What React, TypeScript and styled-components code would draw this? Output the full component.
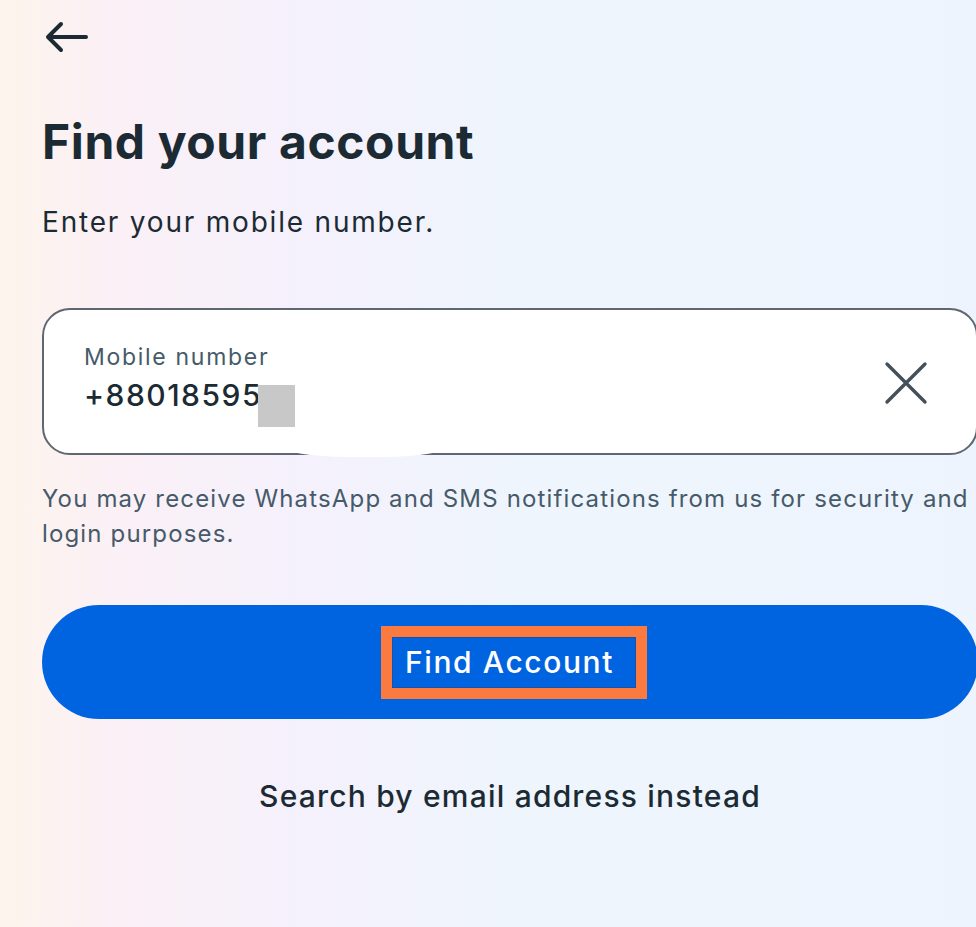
import React from "react";
import styled, { createGlobalStyle } from "styled-components";

const GlobalStyle = createGlobalStyle`
  html, body {
    margin: 0;
    padding: 0;
    overflow: hidden;
  }
  body {
    width: 976px;
    height: 927px;
    font-family: Inter, "Noto Sans", sans-serif;
    color: #1c2b33;
    background: linear-gradient(
      90deg,
      #fdf4ec 0%,
      #fbf0f6 12%,
      #f5f1fc 30%,
      #eef5fd 55%,
      #edf4fd 100%
    );
  }
`;

const Page = styled.div`
  width: 936px;
  padding: 20px 0 0 42px;
  display: flex;
  flex-direction: column;
`;

const BackButton = styled.button`
  width: 48px;
  height: 34px;
  padding: 0;
  margin-left: 3px;
  border: none;
  background: none;
  display: flex;
  align-items: center;
  cursor: pointer;
`;

const Title = styled.h1`
  margin: 59px 0 0;
  font-size: 48px;
  font-weight: 700;
  letter-spacing: 0.6px;
  line-height: 58px;
  color: #1c2b33;
`;

const Subtitle = styled.p`
  margin: 33px 0 0;
  font-size: 28px;
  font-weight: 400;
  letter-spacing: 1.8px;
  line-height: 36px;
  color: #1c2b33;
`;

const Field = styled.div`
  position: relative;
  margin-top: 68px;
  height: 143px;
  border: 2px solid #5f6770;
  border-radius: 28px;
  background: #fff;
  display: flex;
  align-items: center;
  padding: 0 46px 0 40px;
`;

const FieldText = styled.div`
  flex: 1;
  display: flex;
  flex-direction: column;
  gap: 4px;
  margin-top: -8px;
`;

const Label = styled.span`
  font-size: 23px;
  letter-spacing: 1.7px;
  line-height: 30px;
  color: #465a69;
`;

const Value = styled.span`
  font-size: 30px;
  font-weight: 500;
  letter-spacing: 1.5px;
  line-height: 38px;
  color: #1c2b33;
`;

const Redact = styled.span`
  position: absolute;
  left: 214px;
  top: 75px;
  width: 37px;
  height: 42px;
  background: #c8c8c8;
`;

const Blob = styled.span`
  position: absolute;
  left: 236px;
  bottom: -4px;
  width: 170px;
  height: 30px;
  background: #fff;
  border-radius: 50% 50% 40% 40%;
`;

const ClearButton = styled.button`
  width: 48px;
  height: 48px;
  padding: 0;
  border: none;
  background: none;
  display: flex;
  align-items: center;
  justify-content: center;
  margin-top: 2px;
`;

const Hint = styled.p`
  margin: 26px 0 0;
  font-size: 24px;
  line-height: 35px;
  letter-spacing: 1.15px;
  color: #465a69;
`;

const PrimaryButton = styled.button`
  margin-top: 54px;
  height: 114px;
  border: none;
  border-radius: 57px;
  background: #0064e0;
  display: flex;
  align-items: center;
  justify-content: center;
  cursor: pointer;
`;

const Highlight = styled.span`
  border: 11px solid #fb7a40;
  padding: 5px 22px 6px 13px;
  margin-left: 8px;
  font-family: Inter, "Noto Sans", sans-serif;
  font-size: 30px;
  font-weight: 500;
  letter-spacing: 1.6px;
  line-height: 40px;
  color: #fff;
  box-shadow: inset 0 0 0 1px #1c4fa8;
`;

const LinkText = styled.a`
  margin-top: 57px;
  align-self: center;
  font-size: 30px;
  font-weight: 500;
  letter-spacing: 1.2px;
  line-height: 40px;
  color: #1c2b33;
  text-decoration: none;
  cursor: pointer;
`;

const App = () => {
  return (
    <>
      <GlobalStyle />
      <Page>
        <BackButton aria-label="Back">
          <svg width="44" height="32" viewBox="0 0 44 32" fill="none">
            <path
              d="M41 16H4M16 3L3 16l13 13"
              stroke="#1c2b33"
              strokeWidth="4"
              strokeLinecap="round"
              strokeLinejoin="round"
            />
          </svg>
        </BackButton>
        <Title>Find your account</Title>
        <Subtitle>Enter your mobile number.</Subtitle>
        <Field>
          <FieldText>
            <Label>Mobile number</Label>
            <Value>+88018595</Value>
          </FieldText>
          <Redact />
          <Blob />
          <ClearButton aria-label="Clear">
            <svg width="44" height="44" viewBox="0 0 44 44" fill="none">
              <path
                d="M3 3l38 38M41 3L3 41"
                stroke="#465058"
                strokeWidth="3.4"
                strokeLinecap="round"
              />
            </svg>
          </ClearButton>
        </Field>
        <Hint>
          You may receive WhatsApp and SMS notifications from us for security
          and login purposes.
        </Hint>
        <PrimaryButton>
          <Highlight>Find Account</Highlight>
        </PrimaryButton>
        <LinkText>Search by email address instead</LinkText>
      </Page>
    </>
  );
};

export default App;
